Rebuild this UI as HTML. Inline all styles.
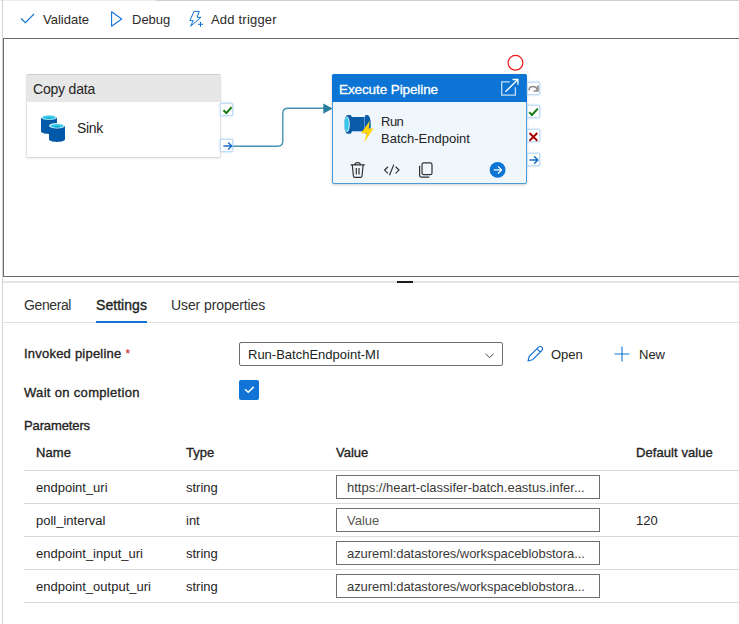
<!DOCTYPE html>
<html>
<head>
<meta charset="utf-8">
<title>Pipeline</title>
<style>
html,body{margin:0;padding:0;}
body{width:739px;height:624px;position:relative;overflow:hidden;background:#fff;font-family:"Liberation Sans",sans-serif;font-size:13px;color:#201f1e;}
.abs{position:absolute;}
.t{position:absolute;white-space:nowrap;line-height:16px;}
#topline{left:0;top:0;width:739px;height:1px;background:linear-gradient(90deg,#ececec 0,#ececec 156px,#d0d0d0 156px,#d0d0d0 100%);}
#leftline{left:2px;top:0;width:1px;height:624px;background:#d2d2d2;}
#canvas{left:3px;top:38px;width:760px;height:237px;border:1px solid #6b6b6b;border-right:none;background:#fff;}
#splitline{left:3px;top:281px;width:736px;height:2px;background:#e4e4e4;}
#handle{left:397px;top:281px;width:16px;height:2px;background:#1b1b1b;}
#tabline{left:4px;top:322px;width:735px;height:1px;background:#e1dfdd;}
#tabsel{left:96px;top:321px;width:51px;height:2px;background:#1173d6;}
.tb{font-size:13px;top:12px;color:#2b2a29;}
.node{position:absolute;background:#fff;border-radius:2px;}
#copy{left:26px;top:74px;width:193px;height:82px;border:1px solid #e2e2e2;border-top-color:#d0d0d0;border-bottom-color:#d8d8d8;box-shadow:0 1px 2px rgba(0,0,0,.08);}
#copyhead{left:0;top:0;width:193px;height:27px;background:#e7e7e7;}
#exec{left:332px;top:74px;width:193px;height:108px;border:1px solid #4a9ad8;background:#eff6fc;box-shadow:0 1px 3px rgba(0,0,0,.2);}
#exechead{left:-1px;top:-1px;width:195px;height:28px;background:#0b74d4;border-radius:2px 2px 0 0;}
.port{position:absolute;width:11px;height:11px;border:1px solid #c4ddf5;background:#fff;border-radius:1px;box-shadow:0 0 2px #8fc0f0;}
.port svg{overflow:visible;display:block;}
.lbl{font-size:13px;color:#252423;-webkit-text-stroke:.35px #252423;}
.cell{font-size:13px;color:#252423;}
.rowline{position:absolute;left:24px;width:715px;height:1px;background:#d9d9d9;}
.inp{position:absolute;left:336px;width:262px;height:22px;border:1px solid #6e6e6e;background:#fff;}
.inp span{position:absolute;left:10px;top:4px;line-height:16px;white-space:nowrap;font-size:13px;color:#3b3a39;}
</style>
</head>
<body>
<div class="abs" id="topline"></div>
<div class="abs" id="leftline"></div>

<!-- toolbar -->
<svg class="abs" style="left:20px;top:11px" width="16" height="16" viewBox="0 0 16 16"><path d="M1 7.500 L5.400 11.700 L14 3" fill="none" stroke="#1173d6" stroke-width="1.100"/></svg>
<div class="t tb" id="tvalidate" style="left:43px">Validate</div>
<svg class="abs" style="left:108px;top:10px" width="16" height="18" viewBox="0 0 16 18"><path d="M3.600 1.800 L13.700 9 L3.600 16.200 Z" fill="none" stroke="#1173d6" stroke-width="1.100" stroke-linejoin="round"/></svg>
<div class="t tb" id="tdebug" style="left:132px">Debug</div>
<svg class="abs" style="left:187px;top:9px" width="20" height="20" viewBox="0 0 20 20"><path d="M7 2.400 H12.300 L10 8.300 H14 L3.600 17.200 L6.200 11.600 H2.800 Z" fill="none" stroke="#1173d6" stroke-width="1" stroke-linejoin="round"/><path d="M13.500 12.800 V17.800 M11 15.300 H16" stroke="#1173d6" stroke-width="1" fill="none"/></svg>
<div class="t tb" id="ttrigger" style="left:211px;letter-spacing:.2px">Add trigger</div>

<!-- canvas -->
<div class="abs" id="canvas"></div>

<!-- Copy data node -->
<div class="node" id="copy">
  <div class="abs" id="copyhead"></div>
  <div class="t" id="tcopy" style="left:6px;top:6px;font-size:14px;letter-spacing:-.2px;color:#252423;">Copy data</div>
  <div class="t" id="tsink" style="left:50px;top:45px;font-size:14px;letter-spacing:-.3px;color:#252423;">Sink</div>
</div>
<svg class="abs" style="left:0;top:0" width="739" height="280" viewBox="0 0 739 280">
  <!-- sink icon -->
  <g id="sinkicon">
    <path d="M41 117.300 V131.300 C41 134.800 57 134.800 57 131.300 V117.300 Z" fill="#0058a9"/>
    <ellipse cx="49" cy="117.300" rx="8" ry="2.800" fill="#eef3f7"/>
    <ellipse cx="49" cy="117.500" rx="6.600" ry="2" fill="#35cbee"/>
    <ellipse cx="49" cy="118.200" rx="3" ry="0.900" fill="#22acd3"/>
    <path d="M49 125.700 V139.300 C49 142.800 65 142.800 65 139.300 V125.700 Z" fill="#0058a9"/>
    <ellipse cx="57" cy="125.700" rx="8" ry="2.800" fill="#eef3f7"/>
    <ellipse cx="57" cy="125.900" rx="6.600" ry="2" fill="#35cbee"/>
    <ellipse cx="57" cy="126.600" rx="3" ry="0.900" fill="#22acd3"/>
  </g>
  <!-- connector -->
  <path d="M233 146.200 H277.500 Q282.800 146.200 282.800 141 V113.500 Q282.800 108.300 288 108.300 H325" fill="none" stroke="#4793b0" stroke-width="1.400"/>
  <path d="M323.300 103.400 L332.600 108.500 L323.300 113.700 Z" fill="#2a7c9c"/>
</svg>
<div class="port" style="left:220px;top:103px"><svg width="11" height="11" viewBox="0 0 11 11"><path d="M2.500 6.200 L5.400 9.100 L10.600 3.100" fill="none" stroke="#107c10" stroke-width="2"/></svg></div>
<div class="port" style="left:220px;top:139px"><svg width="11" height="11" viewBox="0 0 11 11"><path d="M2.400 6 H10.600 M7.200 2.500 L10.700 6 L7.200 9.500" fill="none" stroke="#1a6fc4" stroke-width="1.500"/></svg></div>

<!-- Execute Pipeline node -->
<div class="node" id="exec">
  <div class="abs" id="exechead"></div>
  <div class="t" id="texec" style="left:6px;top:7px;font-size:13.500px;letter-spacing:-.1px;color:#fff;-webkit-text-stroke:.3px #fff;">Execute Pipeline</div>
  <div class="t" id="trun" style="left:48px;top:39px;font-size:13px;letter-spacing:-.5px;color:#252423;">Run</div>
  <div class="t" id="tbatch" style="left:48px;top:56px;font-size:13px;color:#252423;">Batch-Endpoint</div>
</div>
<svg class="abs" style="left:0;top:0" width="739" height="280" viewBox="0 0 739 280">
  <!-- open external -->
  <path d="M509.800 81.800 H501.700 V95.200 H515.400 V87.300" fill="none" stroke="#c3ddf5" stroke-width="1.300"/>
  <path d="M505.400 91.800 L517.800 79.500 M512.500 79.500 H517.900 V84.700" fill="none" stroke="#fff" stroke-width="1.300"/>
  <!-- pipe icon -->
  <g id="pipeicon">
    <path d="M366 114.900 H367.500 A3.300 9.400 0 0 1 367.500 133.700 H366 A2.500 9.400 0 0 1 366 114.900 Z" fill="#0b5ca8"/>
    <path d="M364.300 116 V132.500" stroke="#dbe9f7" stroke-width="1" fill="none"/>
    <rect x="348.500" y="117" width="16" height="14.300" fill="#0b5ca8"/>
    <path d="M347.500 114.900 H350.300 A2.500 9.400 0 0 1 350.300 133.700 H347.500 A3.300 9.400 0 0 1 347.500 114.900 Z" fill="#0b5ca8"/>
    <ellipse cx="347" cy="124.300" rx="2.800" ry="7.800" fill="#e3eef8"/>
    <ellipse cx="346.700" cy="124.300" rx="2.100" ry="7" fill="#32c8ec"/>
    <path d="M369.900 120.700 L361 133.300 H366.700 L364.200 142.200 L373.600 128.600 H368.700 Z" fill="#ffd40f"/>
  </g>
  <!-- trash -->
  <path d="M350.600 164.800 H364.800 M355 164.500 C355 161.900 360.300 161.900 360.300 164.500 M352.300 165 L353.400 176 C353.500 177 354 177.300 354.800 177.300 H360.600 C361.400 177.300 361.900 177 362 176 L363.100 165 M356.300 168 V174.500 M359 168 V174.500" fill="none" stroke="#323130" stroke-width="1.200"/>
  <!-- code -->
  <path d="M388 166.800 L384.600 170.100 L388 173.400 M395.600 166.800 L399 170.100 L395.600 173.400 M393.800 164.600 L389.500 175.300" fill="none" stroke="#323130" stroke-width="1.200"/>
  <!-- copy -->
  <rect x="422" y="162.900" width="10" height="11.800" rx="1.800" fill="none" stroke="#323130" stroke-width="1.200"/>
  <path d="M419.600 165.800 V175 C419.600 176.400 420.500 177.200 421.800 177.200 H429.300" fill="none" stroke="#323130" stroke-width="1.200"/>
  <!-- go -->
  <circle cx="497.600" cy="169.900" r="7.900" fill="#0b74d4"/>
  <path d="M493.800 169.900 H501.400 M498 166.300 L501.600 169.900 L498 173.500" fill="none" stroke="#fff" stroke-width="1.200"/>
  <!-- red circle -->
  <circle cx="515.500" cy="62.800" r="7.400" fill="#fff" stroke="#f01a1a" stroke-width="1.200"/>
</svg>
<div class="port" style="left:527px;top:82px;width:11px"><svg width="10" height="11" viewBox="0 0 10 11"><path d="M0.800 7.300 C1.500 2.300 8 2.300 9.500 7.300 M9.900 2.600 V8 H5.600" fill="none" stroke="#8a8886" stroke-width="1.600"/></svg></div>
<div class="port" style="left:527px;top:105px;width:11px"><svg width="10" height="11" viewBox="0 0 10 11"><path d="M1.200 6.200 L3.900 9 L9.800 2.700" fill="none" stroke="#107c10" stroke-width="1.900"/></svg></div>
<div class="port" style="left:527px;top:129px;width:11px"><svg width="10" height="11" viewBox="0 0 10 11"><path d="M1.500 3 L9.300 10.700 M9.300 3 L1.500 10.700" fill="none" stroke="#a80000" stroke-width="1.900"/></svg></div>
<div class="port" style="left:527px;top:153px;width:11px"><svg width="10" height="11" viewBox="0 0 10 11"><path d="M1.400 6 H9.600 M6.200 2.400 L9.800 6 L6.200 9.600" fill="none" stroke="#1a6fc4" stroke-width="1.500"/></svg></div>

<!-- splitter -->
<div class="abs" id="splitline"></div>
<div class="abs" id="handle"></div>

<!-- tabs -->
<div class="t" id="tgeneral" style="left:24px;top:297px;font-size:14px;letter-spacing:-.4px;color:#323130;">General</div>
<div class="t" id="tsettings" style="left:96px;top:297px;font-size:14px;letter-spacing:.05px;color:#201f1e;-webkit-text-stroke:.35px #201f1e;">Settings</div>
<div class="t" id="tuserprop" style="left:171px;top:297px;font-size:14px;letter-spacing:-.1px;color:#323130;">User properties</div>
<div class="abs" id="tabline"></div>
<div class="abs" id="tabsel"></div>

<!-- form -->
<div class="t lbl" id="tinvoked" style="left:24px;top:346px;letter-spacing:.22px;">Invoked pipeline <span style="color:#c4262e;-webkit-text-stroke:0">*</span></div>
<div class="abs" id="select" style="left:239px;top:342px;width:262px;height:22px;border:1px solid #6e6e6e;border-radius:2px;background:#fff;">
  <div class="t" id="tselect" style="left:8px;top:4px;font-size:13px;color:#201f1e;">Run-BatchEndpoint-MI</div>
  <svg class="abs" style="left:243px;top:9px" width="12" height="8" viewBox="0 0 12 8"><path d="M2.500 1.700 L6.500 5.700 L10.500 1.700" fill="none" stroke="#4a4a4a" stroke-width="1"/></svg>
</div>
<svg class="abs" style="left:526px;top:345px" width="18" height="18" viewBox="0 0 18 18"><path d="M2 16 L3.200 11.500 L12.500 2.200 C13.500 1.200 15 1.200 15.800 2.200 C16.800 3.200 16.800 4.500 15.800 5.500 L6.500 14.800 Z M11 3.800 L14.200 7" fill="none" stroke="#1173d6" stroke-width="1.100" stroke-linejoin="round"/></svg>
<div class="t" id="topen" style="left:551px;top:347px;font-size:13px;color:#252423;">Open</div>
<svg class="abs" style="left:614px;top:346px" width="16" height="16" viewBox="0 0 16 16"><path d="M8 0.500 V15.500 M0.500 8 H15.500" fill="none" stroke="#1173d6" stroke-width="1.100"/></svg>
<div class="t" id="tnew" style="left:639px;top:347px;font-size:13px;color:#252423;">New</div>

<div class="t lbl" id="twait" style="left:24px;top:385px;letter-spacing:.32px;">Wait on completion</div>
<div class="abs" id="check" style="left:239px;top:380px;width:20px;height:20px;background:#1173d6;border-radius:2px;"><svg width="20" height="20" viewBox="0 0 20 20"><path d="M6 9.300 L9.200 12.300 L14.700 6.900" fill="none" stroke="#fff" stroke-width="1.500"/></svg></div>

<div class="t lbl" id="tparams" style="left:24px;top:418px;letter-spacing:-.12px;">Parameters</div>

<div class="t lbl" id="hname" style="left:36px;top:445px;letter-spacing:.07px;">Name</div>
<div class="t lbl" id="htype" style="left:186px;top:445px;">Type</div>
<div class="t lbl" id="hvalue" style="left:336px;top:445px;">Value</div>
<div class="t lbl" id="hdefault" style="left:636px;top:445px;letter-spacing:.08px;">Default value</div>

<div class="rowline" style="top:470px"></div>
<div class="rowline" style="top:503px"></div>
<div class="rowline" style="top:536px"></div>
<div class="rowline" style="top:569px"></div>
<div class="rowline" style="top:602px"></div>

<div class="t cell" id="r1n" style="left:36px;top:480px;">endpoint_uri</div>
<div class="t cell" id="r1t" style="left:186px;top:480px;">string</div>
<div class="inp" style="top:475px"><span id="r1v">https://heart-classifer-batch.eastus.infer...</span></div>

<div class="t cell" id="r2n" style="left:36px;top:513px;">poll_interval</div>
<div class="t cell" id="r2t" style="left:186px;top:513px;">int</div>
<div class="inp" style="top:508px"><span id="r2v" style="color:#5a5958">Value</span></div>
<div class="t cell" id="r2d" style="left:636px;top:513px;">120</div>

<div class="t cell" id="r3n" style="left:36px;top:546px;">endpoint_input_uri</div>
<div class="t cell" id="r3t" style="left:186px;top:546px;">string</div>
<div class="inp" style="top:541px"><span id="r3v" style="letter-spacing:-.07px">azureml:datastores/workspaceblobstora...</span></div>

<div class="t cell" id="r4n" style="left:36px;top:579px;">endpoint_output_uri</div>
<div class="t cell" id="r4t" style="left:186px;top:579px;">string</div>
<div class="inp" style="top:574px"><span id="r4v" style="letter-spacing:-.07px">azureml:datastores/workspaceblobstora...</span></div>

</body>
</html>
